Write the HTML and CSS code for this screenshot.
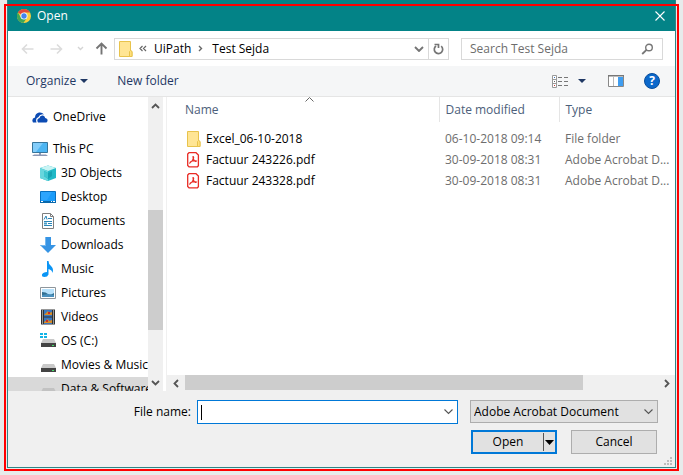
FILE: index.html
```html
<!DOCTYPE html>
<html lang="en">
<head>
<meta charset="utf-8">
<title>Open</title>
<link rel="stylesheet" href="styles.css">
</head>
<body>
<main class="dialog">
  <header class="titlebar">
    <svg class="chrome" viewBox="0 0 16 16"><circle cx="8" cy="8" r="7" fill="#f7cf3c"/><path d="M8 8 1.9 4.5A7 7 0 0 1 14.1 4.5H8z" fill="#e24a3b"/><path d="M1.9 4.5A7 7 0 0 0 7.4 15L11 9.8 8 8 5 9.8z" fill="#3fa757"/><circle cx="8" cy="8" r="3.5" fill="#fff"/><circle cx="8" cy="8" r="2.7" fill="#4485ee"/></svg>
    <h1 class="title">Open</h1>
    <button class="plain close" aria-label="Close"><svg width="10" height="10" viewBox="0 0 10 10"><path d="M.5.5l9 9M9.500.5l-9 9" stroke="#fff" stroke-width="1.1"/></svg></button>
  </header>

  <nav class="navbar">
    <button class="plain nav-btn" aria-label="Back"><svg width="13" height="12" viewBox="0 0 13 12"><path d="M12.500 6H1.500M6 1.500 1.500 6 6 10.500" fill="none" stroke="#dcdcdc" stroke-width="1.600"/></svg></button>
    <button class="plain nav-btn" aria-label="Forward"><svg width="13" height="12" viewBox="0 0 13 12"><path d="M.5 6h11M7 1.500 11.500 6 7 10.500" fill="none" stroke="#dcdcdc" stroke-width="1.600"/></svg></button>
    <button class="plain nav-recent" aria-label="Recent locations"><svg width="7" height="5" viewBox="0 0 7 5"><path d="M1 1l2.500 2.500L6 1" fill="none" stroke="#d4d4d4" stroke-width="1.400"/></svg></button>
    <button class="plain nav-up" aria-label="Up"><svg width="13" height="13" viewBox="0 0 13 13"><path d="M6.500 12.500V1.500M1.500 6.500l5-5 5 5" fill="none" stroke="#757575" stroke-width="1.900"/></svg></button>
    <div class="address">
      <svg class="folder" viewBox="0 0 14 16"><path d="M.5.5h11v9l1.500 1v5H.5z" fill="#ffe594" stroke="#e8c34c"/><path d="M10.500 15.500v-5l1-1 1.500 1v5z" fill="#ffe07c" stroke="#e8c34c"/></svg>
      <svg class="back-mark" width="8" height="7" viewBox="0 0 8 7"><path d="M3.500 1 1 3.500 3.500 6M7 1 4.500 3.500 7 6" fill="none" stroke="#666" stroke-width="1.200"/></svg>
      <a class="crumb" href="#">UiPath</a>
      <svg class="crumb-mark" width="5" height="7" viewBox="0 0 5 7"><path d="M1 1l2.500 2.500L1 6" fill="none" stroke="#666" stroke-width="1.400"/></svg>
      <a class="crumb" href="#">Test Sejda</a>
      <button class="plain addr-drop" aria-label="Previous locations"><svg width="10" height="6" viewBox="0 0 10 6"><path d="M1 1l4 4 4-4" fill="none" stroke="#757575" stroke-width="1.900"/></svg></button>
      <button class="plain refresh" aria-label="Refresh"><svg width="11" height="12" viewBox="0 0 11 12"><path d="M3 3A4.200 4.200 0 1 0 8.200 3.200" fill="none" stroke="#757575" stroke-width="1.700"/><path d="M1.500 1.500h4V5" fill="none" stroke="#757575" stroke-width="1.700"/></svg></button>
    </div>
    <div class="search">
      <input class="search-input" type="search" aria-label="Search Test Sejda" placeholder="Search Test Sejda">
      <svg width="13" height="12" viewBox="0 0 13 12"><circle cx="8" cy="4.500" r="3.300" fill="none" stroke="#777" stroke-width="1.400"/><path d="M5.500 6.800 1.200 11" stroke="#777" stroke-width="1.800"/></svg>
    </div>
  </nav>

  <div class="toolbar">
    <button class="plain organize">Organize<svg width="8" height="4" viewBox="0 0 8 4"><path d="M0 0h8L4 4z" fill="#1f3864"/></svg></button>
    <button class="plain">New folder</button>
    <button class="plain view" aria-label="Change your view"><svg width="17" height="13" viewBox="0 0 17 13"><path d="M.5.5h4v12h-4zM.5 4.500h4M.5 8.500h4" fill="#fff" stroke="#999"/><path d="M2 2h1v1H2z" fill="#3a6fb8"/><path d="M2 6h1v1H2z" fill="#666"/><path d="M2 10h1v1H2z" fill="#c33"/><path d="M6 2.500h4m2 0h4M6 6.500h4m2 0h4M6 10.500h4m2 0h4" stroke="#777"/></svg><svg width="8" height="4" viewBox="0 0 8 4"><path d="M0 0h8L4 4z" fill="#1f3864"/></svg></button>
    <button class="plain preview" aria-label="Show the preview pane"><svg width="16" height="12" viewBox="0 0 16 12"><path d="M.5.5h15v11H.5z" fill="#fff" stroke="#888"/><path d="M0 .5h16" stroke="#777" stroke-width="2"/><path d="M5.500 1v10" stroke="#bbb"/><path d="M10 2h5v9h-5z" fill="#3f9df0"/></svg></button>
    <button class="plain help" aria-label="Get help">?</button>
  </div>

  <section class="content">
    <ul class="tree">
      <li class="node root"><svg viewBox="0 0 16 16"><path d="M1 13.500Q-1 9.500 3 8.500 3 4.500 7 3.500 10 3 12 5.500 8 4.500 6.500 8 3 9 4.500 13.500z" fill="#0c4bb3"/><path d="M6 13.500Q4 10 7.500 9 8 6 11 6.500 13 7 13.200 9 16 9.500 15.500 12 15 13.500 14 13.500z" fill="#0c4bb3"/></svg>OneDrive</li>
      <li class="node root pc"><svg viewBox="0 0 16 16"><path d="M.5 1.500h15v10H.5z" fill="#4db5f2" stroke="#36759b"/><path d="M1 2h10L4 11H1z" fill="#83cdfa"/><path d="M7 12h2v2H7zM2 13.500h12l2 1.500H0z" fill="#8b98b5"/></svg>This PC</li>
      <li class="node"><svg viewBox="0 0 16 16"><path d="M0 3l8-2.500L16 3v10l-8 3-8-3z" fill="#20b8c6"/><path d="M0 3l8-2.500L16 3 8 6z" fill="#c9f4f4"/><path d="M0 3l8 3v10l-8-3z" fill="#67d6dd"/><path d="M4 6l4 2 4-2v5l-4 3-4-3z" fill="#15a2b2"/><path d="M4 6l4 2v6l-4-3z" fill="#3fc7d0"/></svg>3D Objects</li>
      <li class="node"><svg viewBox="0 0 16 16"><path d="M.5 2.500h15v11H.5z" fill="#1a9cfa" stroke="#0870c0"/><path d="M1 3h11L7 11H1z" fill="#3babff" opacity=".6"/><path d="M0 12h16v2H0z" fill="#0868ac"/><path d="M1 12h2v1H1zM11 12h1v1h-1zM13 12h2v1h-2z" fill="#fff"/></svg>Desktop</li>
      <li class="node"><svg viewBox="0 0 16 16"><path d="M2.500.5h8l3 3v12h-11z" fill="#fff" stroke="#7e7e7e"/><path d="M10.500.5v3h3" fill="none" stroke="#7e7e7e"/><path d="M4 6.500 6 3l1 3.500M8 5.500h4M4 8.500h8M8 10.500h4M4 12.500h8" stroke="#2b86b8" fill="none"/><path d="M4 9.500h3v2H4z" fill="#479cc6"/></svg>Documents</li>
      <li class="node"><svg viewBox="0 0 16 16"><path d="M5 0h6v8h5l-8 8-8-8h5z" fill="#3694e4"/><path d="M5 0h1v9H2L0 8h5z" fill="#75b8ee"/></svg>Downloads</li>
      <li class="node"><svg viewBox="0 0 16 16"><path d="M7 0h1.500q0 3 2.500 5 3 2.500 1.500 7-.3-3-4-4v5.500q-1 2.500-4 2.500-3 0-2.500-2.500Q3 11 7 11z" fill="#0a95f5"/></svg>Music</li>
      <li class="node"><svg viewBox="0 0 16 16"><path d="M.5 2.500h15v11H.5z" fill="#fff" stroke="#8e969c"/><path d="M2 4h12v8H2z" fill="#b7e1fb"/><path d="M2 7q4 0 6 2t6-1v4H2z" fill="#326f91"/><path d="M2 10l6-1 6 1v2H2z" fill="#4a90bd"/></svg>Pictures</li>
      <li class="node"><svg viewBox="0 0 16 16"><path d="M1 .5h14v15H1z" fill="#303030"/><path d="M4 1h8v6.500H4zM4 8.500h8V15H4z" fill="#3977bf"/><path d="M5 5l3-3 1 2 3-1v3H4zM4 13l4-3 1 2 3-1v3H4z" fill="#d88c27"/><path d="M8 3h2v2H8zM6 11h2v2H6z" fill="#c72b27"/><path d="M2.500 1.500v14m11-14v14" stroke="#fff" stroke-dasharray="1 1"/></svg>Videos</li>
      <li class="node"><svg viewBox="0 0 16 16"><path d="M0 0h3v2H0zM4 0h3v2H4zM0 3h3v2H0zM4 3h3v2H4z" fill="#12b4e7"/><path d="M3 6h11l2 4H1z" fill="#c9c9c9"/><path d="M1 10h15v4H1z" fill="#444"/><path d="M12 12h2v1h-2z" fill="#45e06a"/></svg>OS (C:)</li>
      <li class="node"><svg viewBox="0 0 16 16"><path d="M3 7h11l2 4H1z" fill="#c9c9c9"/><path d="M1 11h15v4H1z" fill="#444"/><path d="M12 13h2v1h-2z" fill="#45e06a"/></svg>Movies &amp; Music</li>
      <li class="node selected"><svg viewBox="0 0 16 16"><path d="M3 7h11l2 4H1z" fill="#c2c2c2"/><path d="M1 11h15v4H1z" fill="#444"/></svg>Data &amp; Software</li>
    </ul>
    <div class="vscroll">
      <svg width="9" height="6" viewBox="0 0 9 6"><path d="M1 5l3.500-3.500L8 5" fill="none" stroke="#555" stroke-width="1.800"/></svg>
      <div class="vtrack"><div class="vthumb"></div></div>
      <svg width="9" height="6" viewBox="0 0 9 6"><path d="M1 1l3.500 3.500L8 1" fill="none" stroke="#555" stroke-width="1.800"/></svg>
    </div>
    <div class="files">
      <table class="list">
        <thead>
          <tr><th class="col-name">Name<svg class="sort" width="9" height="5" viewBox="0 0 9 5"><path d="M.5 4.500l4-4 4 4" fill="none" stroke="#666"/></svg></th><th class="col-date">Date modified</th><th class="col-type">Type</th></tr>
        </thead>
        <tbody>
          <tr><td><div class="file"><svg viewBox="0 0 14 16"><path d="M.5.5h11v9l1.500 1v5H.5z" fill="#ffe594" stroke="#e8c34c"/><path d="M10.500 15.500v-5l1-1 1.500 1v5z" fill="#ffe07c" stroke="#e8c34c"/></svg>Excel_06-10-2018</div></td><td>06-10-2018 09:14</td><td>File folder</td></tr>
          <tr><td><div class="file"><svg viewBox="0 0 14 16"><path d="M2 .7h7L11.400 3v10.800l-1 1H2L.7 13.500V2z" fill="#fff" stroke="#e92b24" stroke-width="1.300"/><path d="M6 4.500c1.500 0 .5 4-3.200 6.500 0-2 4.500-2.800 6.700-2C8.500 10.500 5.500 7.500 6 4.500z" fill="none" stroke="#e92b24" stroke-width="1.100"/></svg>Factuur 243226.pdf</div></td><td>30-09-2018 08:31</td><td>Adobe Acrobat D...</td></tr>
          <tr><td><div class="file"><svg viewBox="0 0 14 16"><path d="M2 .7h7L11.400 3v10.800l-1 1H2L.7 13.500V2z" fill="#fff" stroke="#e92b24" stroke-width="1.300"/><path d="M6 4.500c1.500 0 .5 4-3.200 6.500 0-2 4.500-2.800 6.700-2C8.500 10.500 5.500 7.500 6 4.500z" fill="none" stroke="#e92b24" stroke-width="1.100"/></svg>Factuur 243328.pdf</div></td><td>30-09-2018 08:31</td><td>Adobe Acrobat D...</td></tr>
        </tbody>
      </table>
      <div class="hscroll">
        <svg width="6" height="9" viewBox="0 0 6 9"><path d="M5 1 1.500 4.500 5 8" fill="none" stroke="#555" stroke-width="1.800"/></svg>
        <div class="htrack"><div class="hthumb"></div></div>
        <svg width="6" height="9" viewBox="0 0 6 9"><path d="M1 1l3.500 3.500L1 8" fill="none" stroke="#555" stroke-width="1.800"/></svg>
      </div>
    </div>
  </section>

  <footer class="footer">
    <div class="fields">
      <label class="label" for="filename">File name:</label>
      <div class="combo">
        <input class="combo-input" id="filename" type="text">
        <span class="caret"></span>
        <button class="plain" aria-label="Show file names"><svg width="9" height="6" viewBox="0 0 9 6"><path d="M.5.5l4 4 4-4" fill="none" stroke="#555" stroke-width="1.100"/></svg></button>
      </div>
      <div class="filter">
        <select class="filter-select" aria-label="File type"><option>Adobe Acrobat Document</option></select>
        <svg class="filter-mark" width="9" height="6" viewBox="0 0 9 6"><path d="M.5.5l4 4 4-4" fill="none" stroke="#555" stroke-width="1.100"/></svg>
      </div>
    </div>
    <div class="actions">
      <div class="split">
        <button class="plain split-main">Open</button>
        <button class="plain split-drop" aria-label="Open options"><svg width="9" height="5" viewBox="0 0 9 5"><path d="M0 0h9L4.500 5z"/></svg></button>
      </div>
      <button class="cancel">Cancel</button>
    </div>
    <svg class="grip" width="8" height="8" viewBox="0 0 8 8"><path d="M6 0h2v2H6zM3 3h2v2H3zM6 3h2v2H6zM0 6h2v2H0zM3 6h2v2H3zM6 6h2v2H6z" fill="#bdbdbd"/></svg>
  </footer>
</main>
<div class="highlight"></div>
</body>
</html>
```
FILE: styles.css
```css
* { box-sizing: border-box; }

body {
  margin: 0;
  height: 100vh;
  padding: 0 7px 7px;
  background: #e7ebeb;
  font: 12px/16px "Open Sans", "Noto Sans", sans-serif;
  color: #000;
  overflow: hidden;
}

svg { display: block; flex: none; }
button, input, select { font: inherit; color: inherit; margin: 0; }

.plain {
  display: flex;
  align-items: center;
  justify-content: center;
  padding: 0;
  border: 0;
  background: none;
}

.highlight {
  position: absolute;
  inset: 4px;
  border: 2px solid #f00;
  pointer-events: none;
}

.dialog {
  display: flex;
  flex-direction: column;
  height: 100%;
  border: 1px solid #2e8585;
  border-top: 0;
  background: #fff;
}

.titlebar {
  display: flex;
  align-items: center;
  height: 31px;
  padding: 0 9px 0 8px;
  background: #038387;
  color: #fff;
}
.chrome { width: 16px; height: 16px; }
.title { margin: 0 auto 0 5px; font-size: 12px; font-weight: 400; }
.close { width: 12px; height: 12px; }

.navbar {
  display: flex;
  align-items: center;
  height: 35px;
  padding: 0 12px;
}
.nav-btn { width: 15px; margin-right: 14px; }
.nav-recent { width: 9px; margin-right: 9px; }
.nav-btn + .nav-btn { margin-right: 12px; }
.nav-up { width: 14px; margin-right: 6px; }

.address {
  display: flex;
  align-items: center;
  flex: 1;
  height: 22px;
  padding-left: 4px;
  border: 1px solid #d9d9d9;
}
.folder { width: 14px; height: 16px; margin-right: 6px; }
.back-mark { margin-right: 7px; }
.crumb { color: inherit; text-decoration: none; }
.crumb-mark { margin: 0 9px 0 7px; }
.addr-drop { width: 18px; margin-left: auto; }
.refresh { width: 20px; height: 20px; border-left: 1px solid #d9d9d9; }

.search {
  display: flex;
  align-items: center;
  width: 202px;
  height: 22px;
  margin-left: 12px;
  padding: 0 8px;
  border: 1px solid #d9d9d9;
}
.search-input {
  flex: 1;
  min-width: 0;
  padding: 0;
  border: 0;
  outline: 0;
  background: none;
  appearance: none;
}
.search-input::placeholder { color: #6d6d6d; }

.toolbar {
  display: flex;
  align-items: center;
  height: 31px;
  padding: 0 15px 0 18px;
  border-bottom: 1px solid #e5e5e5;
  background: #f5f6f7;
  color: #1f3864;
}
.organize { gap: 4px; margin-right: 29px; }
.view { gap: 9px; margin-left: auto; }
.preview { margin: 0 20px 0 22px; }
.help {
  width: 16px;
  height: 16px;
  border: 1px solid #084d9c;
  border-radius: 50%;
  background: #0b68cb;
  color: #fff;
  font-weight: 700;
}

.content { display: flex; flex: 1; min-height: 0; }

.tree {
  width: 140px;
  margin: 0;
  padding: 8px 0 0;
  overflow: hidden;
  list-style: none;
  white-space: nowrap;
}
.node {
  display: flex;
  align-items: center;
  gap: 5px;
  height: 24px;
  padding-left: 32px;
}
.node svg { width: 16px; height: 16px; }
.root { padding-left: 24px; }
.pc { margin-top: 8px; }
.selected { background: #d9d9d9; }

.vscroll {
  display: flex;
  flex-direction: column;
  align-items: center;
  width: 15px;
  padding: 6px 0 5px;
  background: #f0f0f0;
}
.vtrack { flex: 1; width: 100%; padding: 101px 0 50px; }
.vthumb { height: 100%; background: #cdcdcd; }

.files {
  display: flex;
  flex-direction: column;
  flex: 1;
  min-width: 0;
  margin-left: 3px;
  border-left: 1px solid #f0f0f0;
}
.list { width: 100%; table-layout: fixed; border-collapse: collapse; color: #6d6d6d; }
.list th {
  position: relative;
  height: 25px;
  padding: 0 0 0 6px;
  border-right: 1px solid #e5e5e5;
  color: #4c607a;
  font-weight: 400;
  text-align: left;
}
.list .col-name { width: 272px; padding-left: 18px; }
.col-date { width: 120px; }
.list .col-type { border-right: 0; }
.sort { position: absolute; top: 0; left: 51%; }
.list td { height: 21px; padding: 0 0 0 6px; white-space: nowrap; }
.list td:first-child { padding-left: 20px; }
.list tbody::before { content: ""; display: block; height: 6px; }
.file { display: flex; align-items: center; gap: 5px; color: #000; }
.file svg { width: 14px; height: 16px; }

.hscroll {
  display: flex;
  align-items: center;
  height: 16px;
  margin-top: auto;
  padding: 0 5px 0 6px;
  background: #f0f0f0;
}
.htrack { flex: 1; height: 15px; padding: 0 81px 0 6px; align-self: flex-start; }
.hthumb { height: 100%; background: #cdcdcd; }

.footer {
  position: relative;
  padding: 9px 17px 13px 0;
  background: #f0f0f0;
}
.fields { display: flex; align-items: center; margin-bottom: 6px; }
.label { width: 183px; text-align: right; }
.combo {
  position: relative;
  display: flex;
  flex: 1;
  height: 24px;
  margin: 0 12px 0 6px;
  padding-right: 4px;
  border: 1px solid #0078d7;
  background: #fff;
}
.combo-input {
  flex: 1;
  min-width: 0;
  padding: 0 4px;
  border: 0;
  outline: 0;
  background: none;
}
.caret { position: absolute; top: 4px; left: 3px; width: 1px; height: 15px; background: #000; }
.filter { position: relative; width: 188px; height: 24px; }
.filter-select {
  width: 100%;
  height: 23px;
  padding: 0 20px 0 3px;
  border: 1px solid #adadad;
  border-radius: 0;
  background: #e1e1e1;
  appearance: none;
}
.filter-mark { position: absolute; top: 9px; right: 5px; pointer-events: none; }

.actions { display: flex; justify-content: flex-end; gap: 14px; padding-right: 1px; }
.split {
  display: flex;
  width: 86px;
  height: 24px;
  border: 2px solid #0078d7;
  background: #e1e1e1;
}
.split-main { flex: 1; }
.split-drop { width: 12px; margin: 1px 0; border-left: 1px solid #555; }
.cancel {
  width: 86px;
  height: 24px;
  padding: 0;
  border: 1px solid #adadad;
  background: #e1e1e1;
}
.grip { position: absolute; right: 3px; bottom: 2px; }
```
